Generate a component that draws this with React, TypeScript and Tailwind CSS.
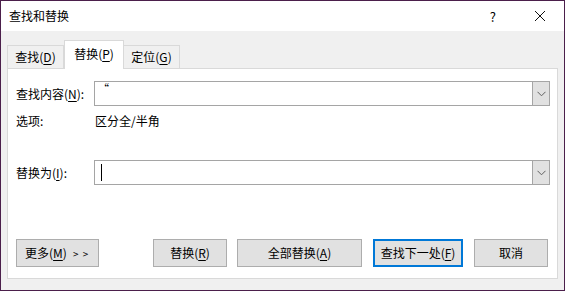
const font = { fontFamily: '"Noto Sans CJK SC", "Noto Sans", sans-serif' };

function Key({ k }: { k: string }) {
  return <span className="underline underline-offset-2">{k}</span>;
}

function Chevron() {
  return (
    <svg width="9" height="6" viewBox="0 0 9 6" className="text-[#606060]">
      <polyline points="0.5,0.8 4.5,4.8 8.5,0.8" fill="none" stroke="currentColor" strokeWidth="1" />
    </svg>
  );
}

function Combo({ children }: { children?: React.ReactNode }) {
  return (
    <div className="flex h-[25px] flex-1 border border-[#a5a5a5] bg-white">
      <div className="relative flex-1">{children}</div>
      <div className="flex w-[17px] items-center justify-center border-l border-[#a5a5a5] bg-[#e1e1e1]">
        <Chevron />
      </div>
    </div>
  );
}

function Btn({ children, w, primary }: { children: React.ReactNode; w: string; primary?: boolean }) {
  return (
    <div
      className={[
        'flex h-[28px] items-center justify-center bg-[#e1e1e1] text-[12px] text-black',
        primary ? 'border-2 border-[#0078d7]' : 'border border-[#adadad]',
        w,
      ].join(' ')}
    >
      {children}
    </div>
  );
}

export default function App() {
  return (
    <div style={font} className="flex h-[291px] w-[565px] flex-col border border-[#4b1f4b] text-[12px] text-black">
      {/* title bar */}
      <div className="flex h-[30px] items-center bg-white pl-[8px]">
        <span className="flex-1 leading-none">查找和替换</span>
        <span className="mr-[38px] text-[13px] leading-none">?</span>
        <svg width="12" height="12" viewBox="0 0 12 12" className="mr-[18px]">
          <path d="M1 1 L11 11 M11 1 L1 11" stroke="#111" strokeWidth="1" />
        </svg>
      </div>

      {/* body */}
      <div className="flex flex-1 flex-col bg-[#f0f0f0] px-[6px]">
        <div className="mt-[9px] flex h-[28px] items-end">
          <div className="flex h-[23px] w-[57px] items-center justify-center border border-b-0 border-[#d9d9d9] bg-[#f0f0f0]">
            查找(<Key k="D" />)
          </div>
          <div className="relative z-10 -mb-px flex h-[29px] w-[60px] items-center justify-center border border-b-0 border-[#d9d9d9] bg-white pb-[2px]">
            替换(<Key k="P" />)
          </div>
          <div className="flex h-[23px] w-[56px] items-center justify-center border border-b-0 border-l-0 border-[#d9d9d9] bg-[#f0f0f0]">
            定位(<Key k="G" />)
          </div>
        </div>

        <div className="flex h-[211px] flex-col border border-[#d9d9d9] bg-white pl-[8px] pr-[7px] pt-[12px]">
          <div className="flex items-center">
            <span className="w-[78px]">
              查找内容(<Key k="N" />):
            </span>
            <Combo>
              <span className="absolute left-[3px] top-[1px] text-[11px] leading-none">“</span>
            </Combo>
          </div>
          <div className="mt-[6px] flex h-[18px] items-center">
            <span className="w-[79px]">选项:</span>
            <span>区分全/半角</span>
          </div>
          <div className="mt-[30px] flex items-center">
            <span className="w-[78px]">
              替换为(<Key k="I" />):
            </span>
            <Combo>
              <span className="absolute left-[6px] top-[3px] h-[17px] w-px bg-black" />
            </Combo>
          </div>

          <div className="mt-[54px] flex items-center">
            <Btn w="w-[83px] justify-start pl-[8px]">
              <span>
                更多(<Key k="M" />)
              </span>
              <span className="ml-[6px] text-[10px] tracking-[1px]">&gt; &gt;</span>
            </Btn>
            <div className="ml-[54px]">
              <Btn w="w-[74px]">
                替换(<Key k="R" />)
              </Btn>
            </div>
            <div className="ml-[10px]">
              <Btn w="w-[125px]">
                全部替换(<Key k="A" />)
              </Btn>
            </div>
            <div className="ml-[11px]">
              <Btn w="w-[90px]" primary>
                查找下一处(<Key k="F" />)
              </Btn>
            </div>
            <div className="ml-[11px]">
              <Btn w="w-[74px]">取消</Btn>
            </div>
          </div>
        </div>
      </div>
    </div>
  );
}
